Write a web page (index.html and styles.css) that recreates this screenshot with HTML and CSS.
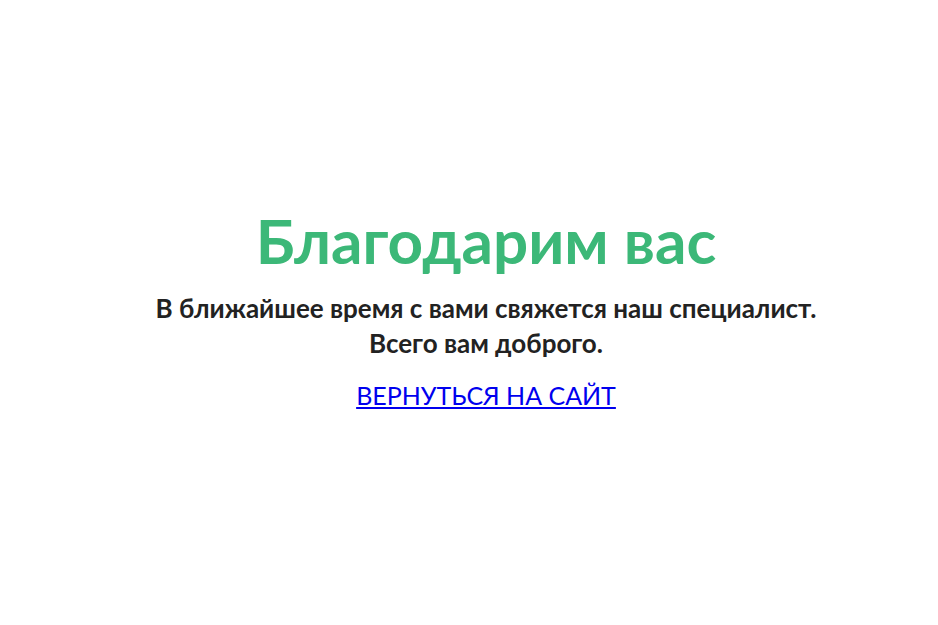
FILE: index.html
```html
<!DOCTYPE html>
<html lang="ru">
<head>
<meta charset="utf-8">
<title>Спасибо</title>
<link rel="stylesheet" href="styles.css">
</head>
<body>
<main class="thanks">
  <h1 class="thanks__title">Благодарим вас</h1>
  <p class="thanks__text">В ближайшее время с вами свяжется наш специалист.<br>Всего вам доброго.</p>
  <a class="thanks__link" href="#">ВЕРНУТЬСЯ НА САЙТ</a>
</main>
</body>
</html>
```
FILE: styles.css
```css
html, body {
  margin: 0;
  padding: 0;
  height: 100%;
  background: #fff;
}
body {
  font-family: Lato, "Noto Sans", sans-serif;
}
.thanks {
  box-sizing: border-box;
  min-height: 100%;
  padding: 0 0 9px 34px;
  display: flex;
  flex-direction: column;
  align-items: center;
  justify-content: center;
  text-align: center;
}
.thanks__title {
  margin: 0;
  font-size: 62px;
  font-weight: 700;
  color: #3cb878;
  line-height: 70px;
}
.thanks__text {
  margin: 16px 0 0;
  font-size: 26px;
  font-weight: 700;
  color: #222;
  line-height: 35px;
}
.thanks__link {
  margin-top: 17px;
  font-size: 25px;
  line-height: 34px;
  color: #0000ee;
  text-decoration: underline;
}
```
